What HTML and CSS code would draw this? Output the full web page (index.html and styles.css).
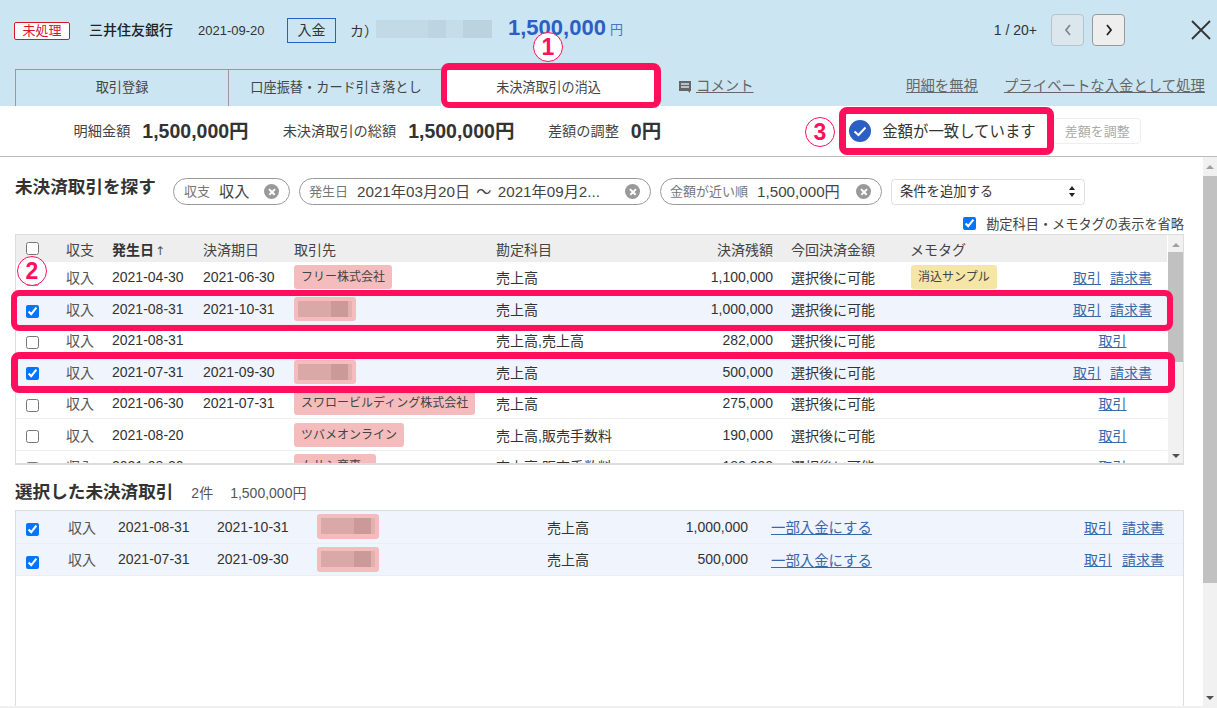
FILE: index.html
```html
<!DOCTYPE html>
<html lang="ja">
<head>
<meta charset="utf-8">
<title>未決済取引の消込</title>
<link rel="stylesheet" href="styles.css">
</head>
<body>
<div class="app">
  <header class="head">
    <div class="head-top">
      <span class="badge">未処理</span>
      <span class="bank">三井住友銀行</span>
      <span class="head-date">2021-09-20</span>
      <span class="kind">入金</span>
      <span class="payer">カ）</span>
      <span class="payer-blur"></span>
      <span class="amount">1,500,000</span>
      <span class="yen">円</span>
      <span class="pager">1 / 20+</span>
      <button class="pg pg-prev"><svg width="10" height="14" viewBox="0 0 10 14"><path d="M7 2 L3 7 L7 12" fill="none" stroke="#7d8a92" stroke-width="1.8"/></svg></button>
      <button class="pg pg-next"><svg width="10" height="14" viewBox="0 0 10 14"><path d="M3 2 L7 7 L3 12" fill="none" stroke="#222" stroke-width="1.8"/></svg></button>
      <svg class="close" width="20" height="20" viewBox="0 0 20 20"><path d="M1 1 L19 19 M19 1 L1 19" stroke="#333" stroke-width="1.8"/></svg>
    </div>
    <nav class="tabs">
      <span class="tab tab-a">取引登録</span>
      <span class="tab tab-b">口座振替・カード引き落とし</span>
      <span class="tab tab-c">未決済取引の消込</span>
      <svg class="cm-ico" width="12" height="12" viewBox="0 0 12 12"><path d="M0 0 H12 V10 H11 V12 L9 10 H0 Z" fill="#666"/><path d="M2 3 H10 M2 6 H10" stroke="#cbe5f2" stroke-width="1.4"/></svg>
      <a class="hl hl-comment">コメント</a>
      <a class="hl hl-ignore">明細を無視</a>
      <a class="hl hl-private">プライベートな入金として処理</a>
    </nav>
  </header>

  <section class="summary">
    <span class="s-label">明細金額</span><b class="s-val">1,500,000円</b>
    <span class="s-label s-l2">未決済取引の総額</span><b class="s-val">1,500,000円</b>
    <span class="s-label s-l3">差額の調整</span><b class="s-val">0円</b>
    <span class="match"><svg width="22" height="22" viewBox="0 0 22 22"><circle cx="11" cy="11" r="11" fill="#2b5fc4"/><path d="M5.5 11.5 L9.5 15 L16.5 7.5" fill="none" stroke="#fff" stroke-width="2"/></svg><span class="match-text">金額が一致しています</span></span>
    <button class="adjust">差額を調整</button>
  </section>

  <div class="body">
    <main class="content">
      <div class="filters">
        <h2 class="h-find">未決済取引を探す</h2>
        <span class="chip chip-1"><span class="c-label">収支</span><span class="c-val">収入</span><i class="c-x"></i></span>
        <span class="chip chip-2"><span class="c-label">発生日</span><span class="c-val">2021年03月20日 ～ 2021年09月2...</span><i class="c-x"></i></span>
        <span class="chip chip-3"><span class="c-label">金額が近い順</span><span class="c-val">1,500,000円</span><i class="c-x"></i></span>
        <span class="add-cond"><span class="add-text">条件を追加する</span><svg width="6" height="11" viewBox="0 0 6 11"><path d="M3 0 L6 4 H0 Z M3 11 L0 7 H6 Z" fill="#222"/></svg></span>
      </div>
      <label class="omit"><input type="checkbox" checked><span>勘定科目・メモタグの表示を省略</span></label>

      <div class="list">
        <div class="list-scroll">
          <table class="tbl tbl1">
            <colgroup><col class="a1"><col class="a2"><col class="a3"><col class="a4"><col class="a5"><col class="a6"><col class="a7"><col class="a8"><col class="a9"><col class="a10"></colgroup>
            <thead>
              <tr><th><input type="checkbox"></th><th>収支</th><th class="sorted">発生日<span class="arrow">↑</span></th><th>決済期日</th><th>取引先</th><th>勘定科目</th><th class="r">決済残額</th><th class="pl">今回決済金額</th><th>メモタグ</th><th></th></tr>
            </thead>
            <tbody>
              <tr><td><input type="checkbox"></td><td class="g">収入</td><td>2021-04-30</td><td>2021-06-30</td><td><span class="tag">フリー株式会社</span></td><td>売上高</td><td class="r">1,100,000</td><td class="pl">選択後に可能</td><td><span class="memo">消込サンプル</span></td><td class="c"><a>取引</a><a class="l2">請求書</a></td></tr>
              <tr class="sel"><td><input type="checkbox" checked></td><td class="g">収入</td><td>2021-08-31</td><td>2021-10-31</td><td><span class="tag blur"><i></i></span></td><td>売上高</td><td class="r">1,000,000</td><td class="pl">選択後に可能</td><td></td><td class="c"><a>取引</a><a class="l2">請求書</a></td></tr>
              <tr><td><input type="checkbox"></td><td class="g">収入</td><td>2021-08-31</td><td></td><td></td><td>売上高,売上高</td><td class="r">282,000</td><td class="pl">選択後に可能</td><td></td><td class="c"><a>取引</a></td></tr>
              <tr class="sel"><td><input type="checkbox" checked></td><td class="g">収入</td><td>2021-07-31</td><td>2021-09-30</td><td><span class="tag blur"><i></i></span></td><td>売上高</td><td class="r">500,000</td><td class="pl">選択後に可能</td><td></td><td class="c"><a>取引</a><a class="l2">請求書</a></td></tr>
              <tr><td><input type="checkbox"></td><td class="g">収入</td><td>2021-06-30</td><td>2021-07-31</td><td><span class="tag">スワロービルディング株式会社</span></td><td>売上高</td><td class="r">275,000</td><td class="pl">選択後に可能</td><td></td><td class="c"><a>取引</a></td></tr>
              <tr><td><input type="checkbox"></td><td class="g">収入</td><td>2021-08-20</td><td></td><td><span class="tag">ツバメオンライン</span></td><td>売上高,販売手数料</td><td class="r">190,000</td><td class="pl">選択後に可能</td><td></td><td class="c"><a>取引</a></td></tr>
              <tr><td><input type="checkbox"></td><td class="g">収入</td><td>2021-08-20</td><td></td><td><span class="tag tag-last">ムサシ商事</span></td><td>売上高,販売手数料</td><td class="r">180,000</td><td class="pl">選択後に可能</td><td></td><td class="c"><a>取引</a></td></tr>
            </tbody>
          </table>
        </div>
        <div class="sb sb-inner"><span class="up"></span><span class="thumb"></span><span class="down"></span></div>
      </div>

      <div class="sel-head"><h2 class="h-sel">選択した未決済取引</h2><span class="cnt">2件</span><span class="tot">1,500,000円</span></div>

      <div class="chosen">
        <table class="tbl tbl2">
          <colgroup><col class="b1"><col class="b2"><col class="b3"><col class="b4"><col class="b5"><col class="b6"><col class="b7"><col class="b8"><col class="b9"></colgroup>
          <tbody>
            <tr class="sel"><td><input type="checkbox" checked></td><td class="g">収入</td><td>2021-08-31</td><td>2021-10-31</td><td><span class="tag blur"><i></i></span></td><td>売上高</td><td class="r">1,000,000</td><td class="part"><a>一部入金にする</a></td><td class="e"><a>取引</a><a class="l2">請求書</a></td></tr>
            <tr class="sel"><td><input type="checkbox" checked></td><td class="g">収入</td><td>2021-07-31</td><td>2021-09-30</td><td><span class="tag blur"><i></i></span></td><td>売上高</td><td class="r">500,000</td><td class="part"><a>一部入金にする</a></td><td class="e"><a>取引</a><a class="l2">請求書</a></td></tr>
          </tbody>
        </table>
      </div>
    </main>
    <div class="sb sb-page"><span class="up"></span><span class="thumb"></span><span class="down"></span></div>
  </div>
</div>

<div class="mark mark-tab"></div>
<div class="mark mark-match"></div>
<div class="mark mark-row1"></div>
<div class="mark mark-row2"></div>
<span class="num num-1">1</span>
<span class="num num-2">2</span>
<span class="num num-3">3</span>
</body>
</html>
```
FILE: styles.css
```css
* { box-sizing: border-box; }
html, body { margin: 0; height: 708px; overflow: hidden; }
body {
  position: relative;
  background: #fff;
  color: #333;
  font-family: "Liberation Sans", "Noto Sans CJK JP", sans-serif;
  font-size: 14px;
}
.app { display: flex; flex-direction: column; height: 708px; }
a { color: #3a68ad; text-decoration: underline; }
h2 { margin: 0; font-size: 17.6px; line-height: 24px; font-weight: 700; color: #333; }
input[type="checkbox"] { margin: 0; width: 13px; height: 13px; display: block; }

/* header */
.head { background: #cbe5f2; height: 106px; flex: none; }
.head-top { display: flex; align-items: center; height: 60px; padding-left: 14px; }
.badge { width: 56px; height: 18px; background: #fff; border: 1px solid #d9152c; border-radius: 2px; color: #d9152c; font-size: 13px; line-height: 15px; text-align: center; margin-top: 2px; }
.bank { margin-left: 19px; margin-bottom: 2px; font-size: 14px; font-weight: 500; color: #222; }
.head-date { margin-left: 25px; font-size: 13px; width: 67px; }
.kind { margin-left: 22px; width: 49px; height: 25px; border: 1px solid #2b5fc4; font-size: 14px; line-height: 22px; text-align: center; }
.payer { margin-left: 14px; width: 26px; margin-bottom: 1px; }
.payer-blur { width: 116px; height: 18px; margin-top: -2px; background: linear-gradient(90deg, #c1dae6 0 45%, #bcd5e2 45% 60%, #c4dde9 60% 75%, #bad3df 75%); }
.amount { margin-left: 16px; margin-bottom: 4px; font-size: 22px; font-weight: 700; color: #2b5fc4; }
.yen { margin-left: 4px; margin-bottom: 3px; font-size: 13px; color: #4a75b8; }
.pager { margin-left: auto; font-size: 14px; color: #333; }
.pg { width: 33px; height: 32px; padding: 0; margin-left: 8px; border-radius: 4px; display: flex; align-items: center; justify-content: center; }
.pg-prev { margin-left: 14px; background: #dce7ed; border: 1px solid #b5c4cc; }
.pg-next { background: #eee; border: 1px solid #999; }
.close { margin-left: 66px; margin-right: 6px; }

.tabs { display: flex; align-items: flex-end; height: 37px; margin-top: 9px; padding-left: 15px; padding-right: 12px; }
.tab { height: 37px; display: flex; align-items: center; justify-content: center; font-size: 13.2px; color: #444; border-top: 1px solid #999; border-left: 1px solid #999; padding-bottom: 3px; }
.tab-a { width: 213px; }
.tab-b { width: 213px; padding-left: 2px; }
.tab-c { width: 219px; background: #fff; border: 0; font-size: 13.1px; padding-right: 4px; }
.cm-ico { margin-left: 19px; margin-bottom: 13px; }
.hl { color: #666; font-size: 14.4px; line-height: 22px; margin-bottom: 9px; }
.hl-comment { margin-left: 5px; }
.hl-ignore { margin-left: auto; }
.hl-private { margin-left: 26px; }

/* summary */
.summary { flex: none; height: 51px; display: flex; align-items: center; padding-left: 73.6px; border-bottom: 1px solid #bbb; }
.s-label { font-size: 14.2px; color: #444; margin-bottom: 2px; }
.s-val { font-size: 19.5px; margin-left: 12px; margin-bottom: 3px; color: #333; }
.s-l2 { margin-left: 34px; }
.s-l3 { margin-left: 33.5px; }
.match { display: flex; align-items: center; margin-left: 188px; width: 204px; }
.match-text { margin-left: 11px; margin-bottom: 3px; font-size: 15.4px; color: #333; white-space: nowrap; }
.adjust { width: 88px; height: 26px; padding: 0 0 2px; background: #fff; border: 1px solid #eee; border-radius: 4px; color: #aaa; font: inherit; font-size: 13px; }

/* body */
.body { flex: 1; display: flex; min-height: 0; }
.content { flex: 1; min-width: 0; padding: 21px 19px 0 15px; display: flex; flex-direction: column; border-bottom: 2px solid #f1f1f1; }
.filters { display: flex; align-items: center; height: 27px; }
.h-find { width: 158px; margin-top: -10px; }
.chip { display: flex; align-items: center; height: 27px; border: 1px solid #999; border-radius: 14px; margin-right: 9px; padding: 0 0 3px 10px; position: relative; }
.chip-1 { width: 117px; }
.chip-2 { width: 352px; padding-left: 9px; word-spacing: 2px; }
.chip-3 { width: 222px; padding-left: 9px; }
.c-label { font-size: 13px; color: #777; }
.c-val { margin-left: 9px; font-size: 15.2px; color: #444; white-space: nowrap; }
.c-x { position: absolute; right: 10px; top: 5px; width: 15px; height: 15px; border-radius: 50%; background: #999; }
.c-x::before, .c-x::after { content: ""; position: absolute; left: 3.5px; top: 6.75px; width: 8px; height: 1.5px; background: #fff; transform: rotate(45deg); }
.c-x::after { transform: rotate(-45deg); }
.add-cond { width: 194px; height: 26px; display: flex; align-items: center; justify-content: space-between; border: 1px solid #ddd; border-radius: 4px; padding: 0 9px 0 8px; font-size: 13.3px; color: #333; background: #fff; }
.add-text { margin-bottom: 3px; }
.omit { display: flex; align-items: center; justify-content: flex-end; height: 14px; margin-top: 11px; font-size: 13.2px; color: #444; }
.omit span { margin-left: 10px; }

/* list */
.list { display: flex; margin-top: 4px; height: 231px; flex: none; border: 1px solid #ddd; border-width: 1px 1px 2px 1px; background: #fff; }
.list-scroll { flex: 1; min-width: 0; overflow: hidden; }
.tbl { table-layout: fixed; width: 1151px; border-collapse: collapse; font-size: 14px; color: #333; }
.tbl th, .tbl td { padding: 0; white-space: nowrap; vertical-align: middle; text-align: left; overflow: hidden; }
.tbl th { height: 27px; background: #eee; font-weight: 400; color: #444; }
.tbl td { height: 31.4px; border-bottom: 1px solid #eee; }
.tbl th:first-child input { margin-left: 9.5px; }
.tbl1 td:first-child input { margin: 4px 0 0 9.5px; }
.tbl .r { text-align: right; }
.tbl .pl { padding-left: 18px; }
.tbl .c { text-align: center; padding-right: 1px; }
.tbl .g { color: #555; }
.tbl .sorted { font-weight: 700; color: #333; }
.arrow { font-family: "DejaVu Sans", sans-serif; font-size: 12px; font-weight: 400; margin-left: 1px; color: #555; }
.l2 { margin-left: 9px; }
.sel td { background: #f0f4fc; }
.tag { display: inline-block; vertical-align: middle; height: 24px; line-height: 24px; padding: 0 7px; font-size: 12px; background: #f4bcbc; border-radius: 3px; color: #444; }
.tag-last { width: 82px; }
.memo { display: inline-block; vertical-align: middle; height: 24px; margin-left: 1px; line-height: 24px; padding: 0 7px; font-size: 12px; background: #f5e6a8; border-radius: 3px; color: #444; }
.blur { width: 62px; padding: 4px; }
.blur i { display: block; height: 16px; background: linear-gradient(90deg, #dba8a8 0 62%, #cc9999 62% 92%, #e3b0b0 92%); }

.a1 { width: 50px; } .a2 { width: 46px; } .a3 { width: 91px; } .a4 { width: 91px; } .a5 { width: 202px; }
.a6 { width: 184px; } .a7 { width: 93px; } .a8 { width: 137px; } .a9 { width: 149px; } .a10 { width: 108px; }

/* fake scrollbars */
.sb { position: relative; flex: none; background: #f1f1f1; }
.sb .thumb { position: absolute; left: 0; right: 0; background: #c1c1c1; }
.sb .up, .sb .down { position: absolute; left: 50%; margin-left: -4px; width: 0; height: 0; border-left: 4px solid transparent; border-right: 4px solid transparent; }
.sb .up { border-bottom: 4px solid #a0a0a0; }
.sb .down { border-top: 4px solid #505050; }
.sb-inner { width: 15px; }
.sb-inner .up { top: 8px; }
.sb-inner .thumb { top: 17px; height: 110px; }
.sb-inner .down { bottom: 5px; }
.sb-page { width: 14px; height: 551px; }
.sb-page .up { top: 8px; }
.sb-page .thumb { top: 19px; height: 407px; }
.sb-page .down { bottom: 8px; }

/* selected */
.sel-head { display: flex; align-items: center; height: 24px; margin-top: 15px; flex: none; }
.cnt { margin-left: 18px; font-size: 14px; color: #555; }
.tot { margin-left: 17px; font-size: 14px; color: #555; }
.chosen { margin-top: 6px; flex: 1; border: 1px solid #ddd; border-width: 1px 1px 0 1px; }
.tbl2 { width: 1167px; }
.tbl2 td { height: 32px; }
.tbl2 td:first-child input { margin: 6px 0 0 9.5px; }
.tbl2 .part { padding-left: 23px; font-size: 14.4px; }
.tbl2 .e { text-align: right; padding-right: 19px; }
.tbl2 .l2 { margin-left: 10px; }
.tbl2 .tag { height: 25px; }
.b1 { width: 52px; } .b2 { width: 50px; } .b3 { width: 99px; } .b4 { width: 100px; } .b5 { width: 230px; }
.b6 { width: 103px; } .b7 { width: 98px; } .b8 { width: 312px; } .b9 { width: 123px; }

/* annotations lying over the page */
.mark { position: absolute; border: 6px solid #ff0f5c; border-radius: 8px; }
.mark-tab { left: 441px; top: 63px; width: 220px; height: 45px; border-width: 7px 7px 6px 6px; }
.mark-match { left: 839px; top: 107px; width: 215px; height: 48px; border-width: 7px; }
.mark-row1 { left: 11px; top: 290px; width: 1162px; height: 41px; }
.mark-row2 { left: 11px; top: 352px; width: 1164px; height: 41px; border-width: 7px; }
.num { position: absolute; width: 30px; height: 30px; border-radius: 50%; background: #fff; border: 1px solid #ff0f5c; color: #ff0f5c; font-size: 23px; font-weight: 700; line-height: 28px; text-align: center; }
.num-1 { left: 533px; top: 32px; }
.num-2 { left: 17px; top: 256px; }
.num-3 { left: 805px; top: 117px; }
```
